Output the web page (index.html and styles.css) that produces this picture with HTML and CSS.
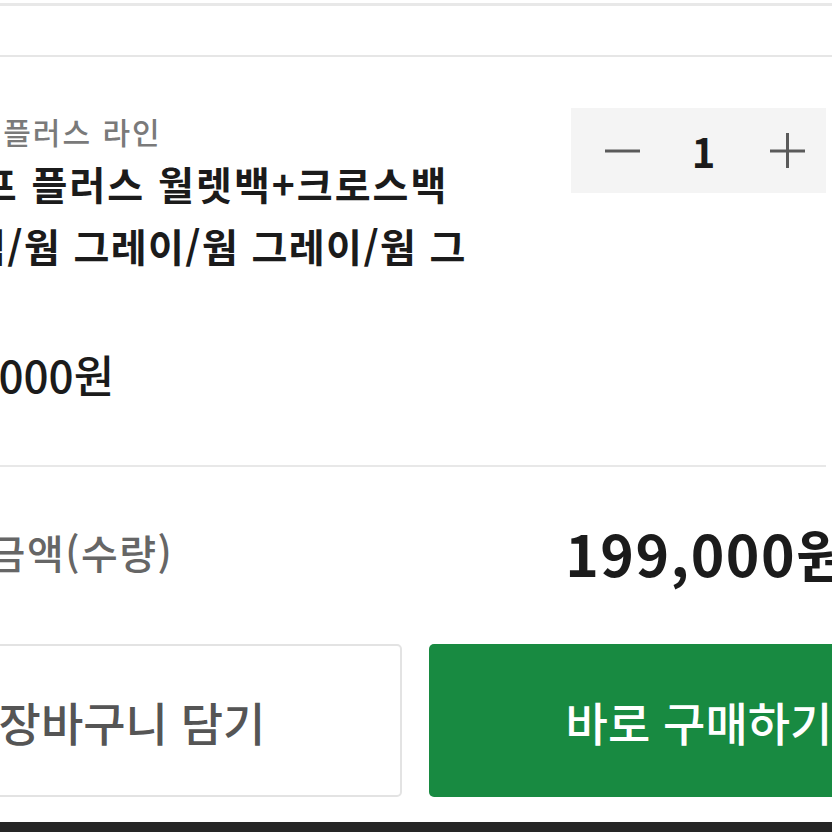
FILE: index.html
```html
<!DOCTYPE html>
<html lang="ko">
<head>
<meta charset="utf-8">
<link rel="stylesheet" href="styles.css">
</head>
<body>
<div class="viewport">
  <div class="prev-section"></div>
  <div class="page">
    <section class="product">
      <div class="info">
        <div class="line">라이프 플러스 라인</div>
        <div class="name">라이프 플러스 월렛백+크로스백</div>
        <div class="option">럼/웜 그레이/웜 그레이/웜 그레이</div>
        <div class="price">199,000원</div>
      </div>
      <div class="qty">
        <span class="qty-btn minus"><svg width="36" height="6" viewBox="0 0 36 6"><rect x="0" y="1.5" width="35" height="3" fill="#5a5a5a"/></svg></span>
        <span class="qty-num">1</span>
        <span class="qty-btn plus"><svg width="36" height="36" viewBox="0 0 36 36"><rect x="0" y="16.5" width="35" height="3" fill="#5a5a5a"/><rect x="16" y="0" width="3" height="35" fill="#5a5a5a"/></svg></span>
      </div>
    </section>
  </div>
  <div class="totals">
    <span class="total-label">상품금액(수량)</span>
    <span class="total-price">199,000원</span>
  </div>
  <div class="actions">
    <button class="btn btn-cart">장바구니 담기</button>
    <button class="btn btn-buy">바로 구매하기</button>
  </div>
  <div class="bottom-bar"></div>
</div>
</body>
</html>
```

FILE: styles.css
```css
* { box-sizing: border-box; margin: 0; padding: 0; }
html, body { background: #fff; }
body {
  font-family: "Noto Sans CJK KR", "Noto Sans", sans-serif;
  color: #1b1b1b;
}
.viewport {
  width: 832px;
  height: 832px;
  overflow: hidden;
  position: relative;
  background: #fff;
}
.prev-section {
  margin-top: 3px;
  height: 54px;
  border-top: 3px solid #e8e8e8;
  border-bottom: 2px solid #e6e6e6;
}
.page {
  margin-left: -90px;
  width: 916px;
}
.product {
  display: flex;
  justify-content: space-between;
  align-items: flex-start;
  height: 410px;
  border-bottom: 2px solid #e8e8e8;
  padding-top: 51px;
}
.info { white-space: nowrap; }
.line {
  font-size: 30px;
  line-height: 42px;
  font-weight: 500;
  letter-spacing: 2px;
  color: #7a7a7a;
  margin-top: 2px;
  margin-left: -6px;
}
.name {
  font-size: 39px;
  line-height: 62px;
  font-weight: 700;
  letter-spacing: 2px;
  color: #1b1b1b;
  margin-left: -5px;
}
.option {
  font-size: 39px;
  line-height: 62px;
  height: 62px;
  overflow: hidden;
  white-space: normal;
  width: 500px;
  margin-left: 60px;
  font-weight: 700;
  letter-spacing: 1.4px;
  color: #1b1b1b;
}
.price {
  margin-top: 68px;
  font-size: 44px;
  line-height: 60px;
  font-weight: 500;
  color: #1b1b1b;
}
.qty {
  width: 255px;
  height: 85px;
  background: #f4f4f4;
  display: flex;
  align-items: center;
  justify-content: space-between;
  padding: 0 20px 0 34px;
}
.qty-btn { display: flex; align-items: center; }
.qty-num {
  font-size: 40px;
  font-weight: 700;
  color: #1b1b1b;
  line-height: 1;
  margin-left: -4px;
}
.totals {
  margin-left: -88px;
  margin-right: -18px;
  height: 177px;
  padding-bottom: 8px;
  display: flex;
  align-items: center;
  justify-content: space-between;
  white-space: nowrap;
}
.total-label {
  font-size: 40px;
  font-weight: 500;
  letter-spacing: 1.5px;
  color: #666;
}
.total-price {
  font-size: 57px;
  font-weight: 700;
  letter-spacing: 1.5px;
  color: #1b1b1b;
}
.actions {
  margin-left: -138px;
  display: flex;
  gap: 27px;
  height: 153px;
}
.btn {
  flex: 0 0 540px;
  height: 153px;
  border-radius: 5px;
  font-family: "Noto Sans CJK KR", "Noto Sans", sans-serif;
  font-size: 46px;
  font-weight: 500;
  white-space: nowrap;
}
.btn-cart {
  background: #fff;
  border: 2px solid #e3e3e3;
  color: #555;
}
.btn-buy {
  background: #188a41;
  border: none;
  color: #fff;
}
.bottom-bar {
  margin-top: 25px;
  height: 20px;
  background: #262626;
}
```
